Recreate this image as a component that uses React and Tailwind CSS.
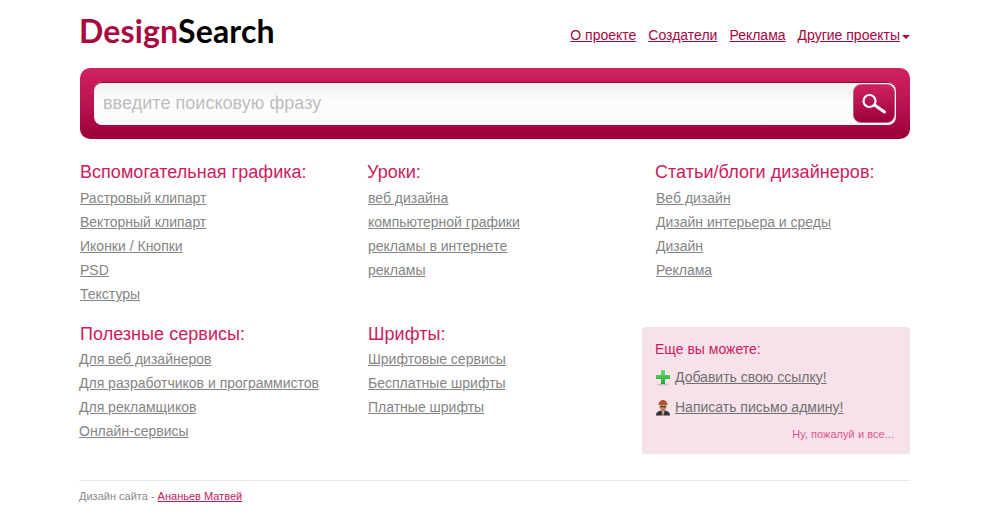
import React from "react";

const arial = "font-['Liberation_Sans',Arial,sans-serif]";

const topLinks = ["О проекте", "Создатели", "Реклама"];

const topSections = [
  {
    title: "Вспомогательная графика:",
    links: ["Растровый клипарт", "Векторный клипарт", "Иконки / Кнопки", "PSD", "Текстуры"],
    listClass: "mt-[2px]",
  },
  {
    title: "Уроки:",
    links: ["веб дизайна", "компьютерной графики", "рекламы в интернете", "рекламы"],
    listClass: "mt-[2px] ml-px",
  },
  {
    title: "Статьи/блоги дизайнеров:",
    links: ["Веб дизайн", "Дизайн интерьера и среды", "Дизайн", "Реклама"],
    listClass: "mt-[2px] ml-px",
  },
];

const bottomSections = [
  {
    title: "Полезные сервисы:",
    links: ["Для веб дизайнеров", "Для разработчиков и программистов", "Для рекламщиков", "Онлайн-сервисы"],
    listClass: "mt-px -ml-px",
  },
  {
    title: "Шрифты:",
    links: ["Шрифтовые сервисы", "Бесплатные шрифты", "Платные шрифты"],
    listClass: "mt-px",
  },
];

function Section({ title, links, listClass }) {
  return (
    <div>
      <h2 className="text-[18px] leading-[24px] tracking-[0.04px] text-[#ce1a5e]">{title}</h2>
      <ul className={listClass}>
        {links.map((link) => (
          <li key={link} className="h-[24px] leading-[24px]">
            <a href="#" className="text-[14px] text-[#858585] underline">
              {link}
            </a>
          </li>
        ))}
      </ul>
    </div>
  );
}

function PlusIcon() {
  return (
    <svg width="16" height="17" viewBox="0 0 16 17" className="shrink-0">
      <defs>
        <linearGradient id="plusFill" x1="0" y1="0" x2="0" y2="1">
          <stop offset="0" stopColor="#6fdc6a" />
          <stop offset="1" stopColor="#1fa53a" />
        </linearGradient>
      </defs>
      <ellipse cx="8" cy="15.500" rx="6" ry="1" fill="#cfc0c5" />
      <path d="M6 1h4v5h5v4h-5v5H6v-5H1V6h5z" fill="url(#plusFill)" />
    </svg>
  );
}

function AdminIcon() {
  return (
    <svg width="16" height="17" viewBox="0 0 16 17" className="shrink-0">
      <path d="M1 16.500c0-3.500 2.500-5 7-5s7 1.500 7 5z" fill="#33343a" />
      <path d="M6.500 11.500h3l-1 5h-1z" fill="#e2e2e2" />
      <path d="M7.600 12.500h.8v3.500h-.8z" fill="#b8382c" />
      <circle cx="8" cy="7.500" r="3.500" fill="#c98a5e" />
      <path d="M3.500 6C3.500 3 5.800 1 8 1s4.500 2 4.500 5z" fill="#b4552a" />
      <path d="M5 7h6v1.500H5z" fill="#5a5048" />
      <path d="M6 10.500h4v1l-2 1-2-1z" fill="#a8714c" />
    </svg>
  );
}

export default function App() {
  return (
    <div className={`w-[1000px] h-[524px] overflow-hidden bg-white ${arial}`}>
      <div className="w-[830px] ml-[80px]">
        {/* Header */}
        <header className="h-[68px] flex justify-between">
          <a
            href="#"
            className="-ml-px mt-[11px] h-[40px] font-['Lato',sans-serif] font-bold text-[32px] leading-[40px] tracking-[0.15px] text-black"
          >
            <span className="text-[#a8093f]">Design</span>Search
          </a>
          <nav className="mt-[26px] flex h-[18px] items-center gap-[12px] text-[14px] text-[#a5063f]">
            {topLinks.map((link) => (
              <a key={link} href="#" className="underline">
                {link}
              </a>
            ))}
            <span className="flex items-center gap-[2px]">
              <a href="#" className="underline">Другие проекты</a>
              <span className="mt-[3px] border-x-[4px] border-t-[4px] border-x-transparent border-t-[#a5063f]" />
            </span>
          </nav>
        </header>

        {/* Search */}
        <form className="h-[71px] rounded-[10px] bg-gradient-to-b from-[#d0215f] via-[#bb1253] to-[#9b0039] px-[14px] pt-[14px]">
          <div className="h-[43px] flex items-center justify-between rounded-[8px] bg-gradient-to-b from-[#f1f1f1] via-[#fdfdfd] to-[#fafafa] pl-[9px] pr-[1px] shadow-[inset_0_1px_0_#8d0b3e]">
            <span className="text-[18px] tracking-[0.04px] text-[#bdbdbd]">введите поисковую фразу</span>
            <button
              type="button"
              className="flex h-[39px] w-[42px] items-center justify-center rounded-[8px] border border-[#c25d88] bg-gradient-to-b from-[#d0215f] via-[#b8124f] to-[#9b0039]"
            >
              <svg width="26" height="24" viewBox="0 0 26 24" fill="none" stroke="#fff">
                <circle cx="8.500" cy="9" r="6" strokeWidth="2.200" />
                <path d="M13.500 13l10 7" strokeWidth="3" strokeLinecap="round" />
              </svg>
            </button>
          </div>
        </form>

        {/* Top categories */}
        <div className="mt-[21px] grid grid-cols-[287px_288px_1fr]">
          {topSections.map((section) => (
            <Section key={section.title} {...section} />
          ))}
        </div>

        {/* Bottom categories */}
        <div className="mt-[16px] grid grid-cols-[288px_274px_268px] items-start">
          {bottomSections.map((section) => (
            <Section key={section.title} {...section} />
          ))}
          <aside className="mt-[5px] h-[127px] rounded-[2px] bg-[#f7e1ea] pl-[13px] pr-[16px] pt-[13px]">
            <p className="text-[14px] leading-[18px] text-[#ce1a5e]">Еще вы можете:</p>
            <a href="#" className="mt-[9px] flex h-[20px] items-center gap-[4px] text-[14px] text-[#707070]">
              <PlusIcon />
              <span className="underline">Добавить свою ссылку!</span>
            </a>
            <a href="#" className="mt-[10px] flex h-[20px] items-center gap-[4px] text-[14px] text-[#707070]">
              <AdminIcon />
              <span className="underline">Написать письмо админу!</span>
            </a>
            <p className="mt-[10px] text-right text-[11px] leading-[14px] tracking-[0.05px] text-[#e0558e]">Ну, пожалуй и все...</p>
          </aside>
        </div>

        {/* Footer */}
        <footer className="mt-[26px] -ml-px border-t border-[#e8e8e8] pt-[8px] text-[11px] leading-[14px] text-[#8a8a8a]">
          Дизайн сайта - <a href="#" className="text-[#c2185b] underline">Ананьев Матвей</a>
        </footer>
      </div>
    </div>
  );
}
